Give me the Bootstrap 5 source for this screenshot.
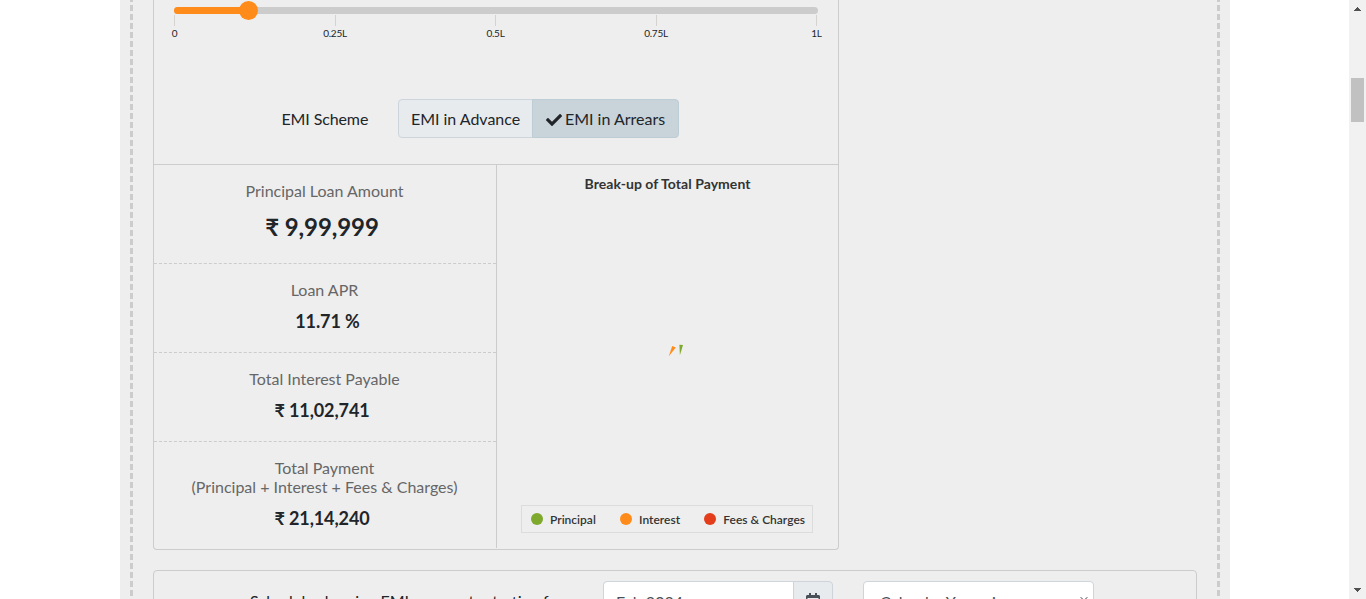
<!DOCTYPE html>
<html lang="en">
<head>
<meta charset="utf-8">
<meta name="viewport" content="width=device-width, initial-scale=1">
<title>EMI Calculator</title>
<link href="https://cdn.jsdelivr.net/npm/bootstrap@5.3.0/dist/css/bootstrap.min.css" rel="stylesheet">
<style>
body{font-family:Lato,"Liberation Sans",sans-serif;font-size:16px;color:#212529;background:#fff;height:599px}
.page-gap{width:120px}
.sheet{width:1110px;background:#eee;padding:0 10px}
.coupon{height:599px;padding:0 23px;
 background:repeating-linear-gradient(#ccc 0 6px,transparent 6px 9px) 0 -4px/3px 612px no-repeat,
 repeating-linear-gradient(#ccc 0 6px,transparent 6px 9px) 100% -4px/3px 612px no-repeat}
.calc{width:686px;height:550px;border:1px solid #ccc;border-top:0;border-radius:0 0 4px 4px}
.controls{height:165px;border-bottom:1px solid #ccc;padding:7px 20px 0}
.track{height:7px;background:#ccc;border-radius:4px}
.track-fill{width:75px;height:7px;background:#ff8c1a;border-radius:4px}
.knob{width:19px;height:19px;border-radius:50%;background:#ff8c1a;top:-6px;left:65px}
.ticks{margin:1px 1px 0 0}
.tick{width:1px;font-size:10px;line-height:12px;letter-spacing:-.25px}
.tick i{width:1px;height:11px;background:#d6d2cf;margin-bottom:1px}
.scheme{margin:60px 0 0 107.5px}
.scheme-label{width:116.5px;letter-spacing:-.12px}
.btn-seg{--bs-btn-font-family:inherit;--bs-btn-color:#212529;--bs-btn-bg:#e7ebee;--bs-btn-border-color:#ccd5dc;--bs-btn-active-bg:#c8d3da;--bs-btn-active-color:#212529;--bs-btn-active-border-color:#beccd5;--bs-btn-border-radius:4px;height:39px;padding:6px 12px;white-space:nowrap}
.btn-seg:first-child{width:135px;letter-spacing:-.03px}
.btn-seg:last-child{width:147px}
.btn-seg svg{vertical-align:-3px;margin-right:-1px}
.summary{width:343px;border-right:1px solid #ccc;height:383px}
.cell{height:89px;border-bottom:1px dashed #ccc;padding-top:16px}
.cell:first-child{height:99px}
.cell:last-child{border-bottom:0;height:107px}
.cell h4{font-size:16px;font-weight:400;line-height:19px;color:#666;margin:0 1px 0 0}
.cell p{font-size:18px;font-weight:700;line-height:24px;letter-spacing:-.1px;margin:10px 0 0;padding-right:6px}
.cell .rate{padding:0 0 0 5px}
.cell:first-child p{font-size:24px;line-height:30px;margin-top:12px}
.chart-title{font-size:14px;font-weight:700;line-height:18px;padding-top:10px;color:#333;letter-spacing:.05px}
.chart-area{height:312px}
.slices{margin:151px 0 0 16px}
.legend-box{width:292px;height:28px;border:1px solid #dcdcdc;font-size:12px;font-weight:600;line-height:26px;color:#333;padding:1px 7px 0 9px;margin-right:1px}
.dot{width:12px;height:12px;border-radius:50%;margin:-1px 7px 0 0}
.schedule{height:60px;margin-top:20px;border:1px solid #ccc;border-radius:4px;padding:10px 102px 0 96px}
.schedule .form-control,.schedule .form-select,.schedule .input-group-text{height:39px;border-color:#ced4da;border-radius:4px;color:#495057}
.schedule .form-control,.schedule .form-select{padding-top:8px}
.sched-label{width:353px;line-height:40px;white-space:nowrap}
.month{width:230px}
.month .input-group-text{width:40px;background:#e7ebee;padding:1px 12px 0}
.year{width:231px;padding-left:16px;font-size:16px;background-size:10px 8px;background-position:right 4px top 13px}
.scroller{width:17px;height:599px;background:#f1f1f1}
.thumb{width:13px;height:44px;background:#c1c1c1;margin-top:67px}
.arrow-down{margin-bottom:7px}
</style>
</head>
<body class="d-flex overflow-hidden">
<div class="page-gap flex-shrink-0"></div>
<main class="sheet flex-shrink-0">
 <div class="coupon overflow-hidden">
  <section class="calc">
   <div class="controls">
    <div class="track position-relative"><div class="track-fill"></div><div class="knob position-absolute"></div></div>
    <div class="ticks d-flex justify-content-between">
     <div class="tick d-flex flex-column align-items-center"><i></i>0</div>
     <div class="tick d-flex flex-column align-items-center"><i></i>0.25L</div>
     <div class="tick d-flex flex-column align-items-center"><i></i>0.5L</div>
     <div class="tick d-flex flex-column align-items-center"><i></i>0.75L</div>
     <div class="tick d-flex flex-column align-items-center"><i></i>1L</div>
    </div>
    <div class="scheme d-flex align-items-center">
     <span class="scheme-label">EMI Scheme</span>
     <div class="btn-group">
      <button class="btn btn-seg" type="button">EMI in Advance</button>
      <button class="btn btn-seg active" type="button"><svg width="16" height="16" viewBox="0 0 512 512"><path fill="#212529" d="M174 439 7 273c-10-10-10-26 0-36l37-37c10-10 26-10 36 0l112 112L432 72c10-10 26-10 36 0l37 37c10 10 10 26 0 36L210 439c-10 10-26 10-36 0z"/></svg> EMI in Arrears</button>
     </div>
    </div>
   </div>
   <div class="d-flex">
    <div class="summary text-center">
     <div class="cell"><h4>Principal Loan Amount</h4><p>₹ 9,99,999</p></div>
     <div class="cell"><h4>Loan APR</h4><p class="rate">11.71 %</p></div>
     <div class="cell"><h4>Total Interest Payable</h4><p>₹ 11,02,741</p></div>
     <div class="cell"><h4>Total Payment<br>(Principal + Interest + Fees &amp; Charges)</h4><p>₹ 21,14,240</p></div>
    </div>
    <div class="flex-fill d-flex flex-column align-items-center">
     <div class="chart-title">Break-up of Total Payment</div>
     <div class="chart-area"><svg class="slices d-block" width="16" height="14" viewBox="0 0 16 14"><path fill="#ff8c1a" d="M4.2 2 7.8 3.6.8 12.2z"/><path fill="#7ea92d" d="M11.4.8 15 1.1 11.9 11.2z"/></svg></div>
     <div class="legend-box d-flex align-items-center justify-content-between">
      <span class="d-flex align-items-center"><i class="dot" style="background:#7ea92d"></i>Principal</span>
      <span class="d-flex align-items-center"><i class="dot" style="background:#ff8c1a"></i>Interest</span>
      <span class="d-flex align-items-center"><i class="dot" style="background:#e43d1b"></i>Fees &amp; Charges</span>
     </div>
    </div>
   </div>
  </section>
  <section class="schedule d-flex">
   <label class="sched-label">Schedule showing EMI payments starting from</label>
   <div class="input-group month flex-nowrap">
    <input class="form-control rounded-end-0" value="Feb 2024" aria-label="Start month">
    <span class="input-group-text rounded-start-0"><svg width="14" height="16" viewBox="0 0 448 512"><path fill="#495057" d="M400 64h-48V12c0-7-5-12-12-12h-40c-7 0-12 5-12 12v52H160V12c0-7-5-12-12-12h-40c-7 0-12 5-12 12v52H48C22 64 0 86 0 112v352c0 26 22 48 48 48h352c26 0 48-22 48-48V112c0-26-22-48-48-48zm-6 400H54c-3 0-6-3-6-6V160h352v298c0 3-3 6-6 6z"/></svg></span>
   </div>
   <select class="form-select year ms-auto" aria-label="Year type"><option>Calendar Year wise</option></select>
  </section>
 </div>
</main>
<div class="scroller ms-auto d-flex flex-column align-items-center">
 <svg class="flex-shrink-0" width="7" height="4" viewBox="0 0 7 4" style="margin-top:7px" shape-rendering="crispEdges"><path fill="#505050" d="M3 0h1v1h1v1h1v1h1v1H0V3h1V2h1V1h1z"/></svg>
 <div class="thumb flex-shrink-0"></div>
 <svg class="arrow-down mt-auto flex-shrink-0" width="7" height="4" viewBox="0 0 7 4" shape-rendering="crispEdges"><path fill="#505050" d="M0 0h7v1H6v1H5v1H4v1H3V3H2V2H1V1H0z"/></svg>
</div>
<script src="https://cdn.jsdelivr.net/npm/bootstrap@5.3.0/dist/js/bootstrap.bundle.min.js"></script>
</body>
</html>
